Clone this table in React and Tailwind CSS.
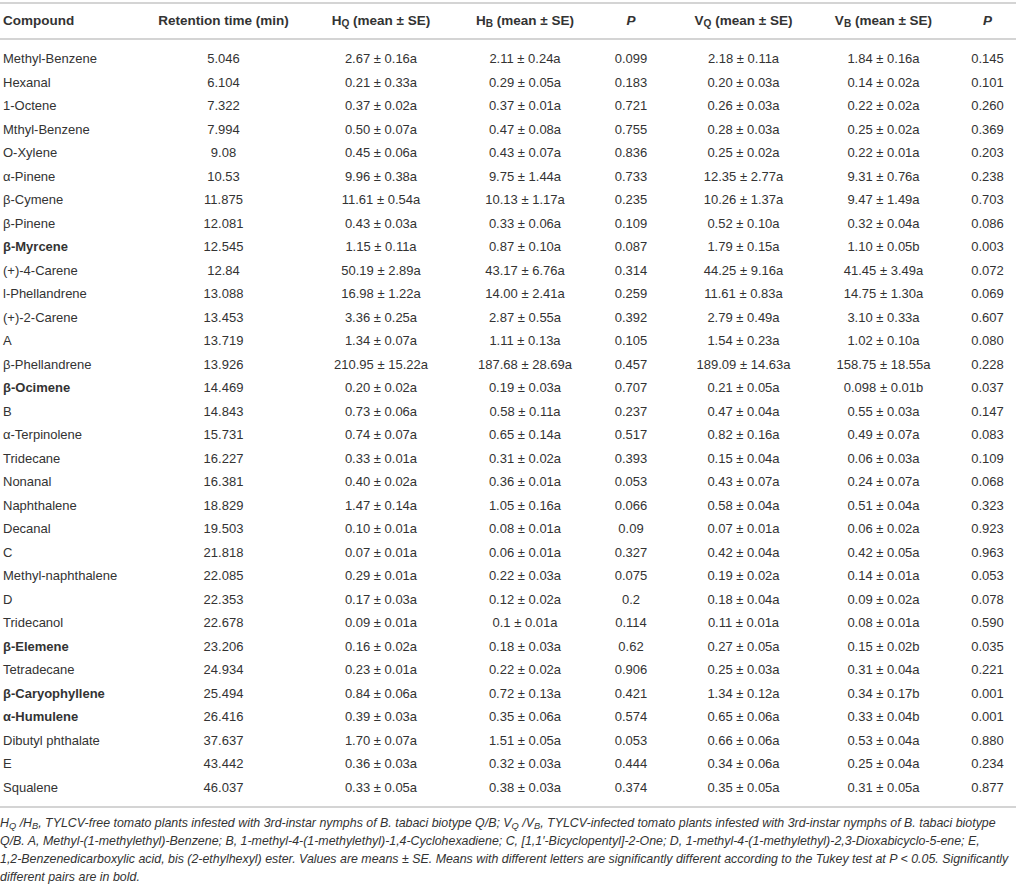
import React from 'react';

const COLS = 'grid grid-cols-[152px_143px_172px_116px_96px_129px_151px_57px]';

// name, retention, HQ, HB, P, VQ, VB, P, bold
const ROWS = [
  ['Methyl-Benzene', '5.046', '2.67 ± 0.16a', '2.11 ± 0.24a', '0.099', '2.18 ± 0.11a', '1.84 ± 0.16a', '0.145'],
  ['Hexanal', '6.104', '0.21 ± 0.33a', '0.29 ± 0.05a', '0.183', '0.20 ± 0.03a', '0.14 ± 0.02a', '0.101'],
  ['1-Octene', '7.322', '0.37 ± 0.02a', '0.37 ± 0.01a', '0.721', '0.26 ± 0.03a', '0.22 ± 0.02a', '0.260'],
  ['Mthyl-Benzene', '7.994', '0.50 ± 0.07a', '0.47 ± 0.08a', '0.755', '0.28 ± 0.03a', '0.25 ± 0.02a', '0.369'],
  ['O-Xylene', '9.08', '0.45 ± 0.06a', '0.43 ± 0.07a', '0.836', '0.25 ± 0.02a', '0.22 ± 0.01a', '0.203'],
  ['α-Pinene', '10.53', '9.96 ± 0.38a', '9.75 ± 1.44a', '0.733', '12.35 ± 2.77a', '9.31 ± 0.76a', '0.238'],
  ['β-Cymene', '11.875', '11.61 ± 0.54a', '10.13 ± 1.17a', '0.235', '10.26 ± 1.37a', '9.47 ± 1.49a', '0.703'],
  ['β-Pinene', '12.081', '0.43 ± 0.03a', '0.33 ± 0.06a', '0.109', '0.52 ± 0.10a', '0.32 ± 0.04a', '0.086'],
  ['β-Myrcene', '12.545', '1.15 ± 0.11a', '0.87 ± 0.10a', '0.087', '1.79 ± 0.15a', '1.10 ± 0.05b', '0.003', true],
  ['(+)-4-Carene', '12.84', '50.19 ± 2.89a', '43.17 ± 6.76a', '0.314', '44.25 ± 9.16a', '41.45 ± 3.49a', '0.072'],
  ['l-Phellandrene', '13.088', '16.98 ± 1.22a', '14.00 ± 2.41a', '0.259', '11.61 ± 0.83a', '14.75 ± 1.30a', '0.069'],
  ['(+)-2-Carene', '13.453', '3.36 ± 0.25a', '2.87 ± 0.55a', '0.392', '2.79 ± 0.49a', '3.10 ± 0.33a', '0.607'],
  ['A', '13.719', '1.34 ± 0.07a', '1.11 ± 0.13a', '0.105', '1.54 ± 0.23a', '1.02 ± 0.10a', '0.080'],
  ['β-Phellandrene', '13.926', '210.95 ± 15.22a', '187.68 ± 28.69a', '0.457', '189.09 ± 14.63a', '158.75 ± 18.55a', '0.228'],
  ['β-Ocimene', '14.469', '0.20 ± 0.02a', '0.19 ± 0.03a', '0.707', '0.21 ± 0.05a', '0.098 ± 0.01b', '0.037', true],
  ['B', '14.843', '0.73 ± 0.06a', '0.58 ± 0.11a', '0.237', '0.47 ± 0.04a', '0.55 ± 0.03a', '0.147'],
  ['α-Terpinolene', '15.731', '0.74 ± 0.07a', '0.65 ± 0.14a', '0.517', '0.82 ± 0.16a', '0.49 ± 0.07a', '0.083'],
  ['Tridecane', '16.227', '0.33 ± 0.01a', '0.31 ± 0.02a', '0.393', '0.15 ± 0.04a', '0.06 ± 0.03a', '0.109'],
  ['Nonanal', '16.381', '0.40 ± 0.02a', '0.36 ± 0.01a', '0.053', '0.43 ± 0.07a', '0.24 ± 0.07a', '0.068'],
  ['Naphthalene', '18.829', '1.47 ± 0.14a', '1.05 ± 0.16a', '0.066', '0.58 ± 0.04a', '0.51 ± 0.04a', '0.323'],
  ['Decanal', '19.503', '0.10 ± 0.01a', '0.08 ± 0.01a', '0.09', '0.07 ± 0.01a', '0.06 ± 0.02a', '0.923'],
  ['C', '21.818', '0.07 ± 0.01a', '0.06 ± 0.01a', '0.327', '0.42 ± 0.04a', '0.42 ± 0.05a', '0.963'],
  ['Methyl-naphthalene', '22.085', '0.29 ± 0.01a', '0.22 ± 0.03a', '0.075', '0.19 ± 0.02a', '0.14 ± 0.01a', '0.053'],
  ['D', '22.353', '0.17 ± 0.03a', '0.12 ± 0.02a', '0.2', '0.18 ± 0.04a', '0.09 ± 0.02a', '0.078'],
  ['Tridecanol', '22.678', '0.09 ± 0.01a', '0.1 ± 0.01a', '0.114', '0.11 ± 0.01a', '0.08 ± 0.01a', '0.590'],
  ['β-Elemene', '23.206', '0.16 ± 0.02a', '0.18 ± 0.03a', '0.62', '0.27 ± 0.05a', '0.15 ± 0.02b', '0.035', true],
  ['Tetradecane', '24.934', '0.23 ± 0.01a', '0.22 ± 0.02a', '0.906', '0.25 ± 0.03a', '0.31 ± 0.04a', '0.221'],
  ['β-Caryophyllene', '25.494', '0.84 ± 0.06a', '0.72 ± 0.13a', '0.421', '1.34 ± 0.12a', '0.34 ± 0.17b', '0.001', true],
  ['α-Humulene', '26.416', '0.39 ± 0.03a', '0.35 ± 0.06a', '0.574', '0.65 ± 0.06a', '0.33 ± 0.04b', '0.001', true],
  ['Dibutyl phthalate', '37.637', '1.70 ± 0.07a', '1.51 ± 0.05a', '0.053', '0.66 ± 0.06a', '0.53 ± 0.04a', '0.880'],
  ['E', '43.442', '0.36 ± 0.03a', '0.32 ± 0.03a', '0.444', '0.34 ± 0.06a', '0.25 ± 0.04a', '0.234'],
  ['Squalene', '46.037', '0.33 ± 0.05a', '0.38 ± 0.03a', '0.374', '0.35 ± 0.05a', '0.31 ± 0.05a', '0.877'],
];

const Sym = ({ base, sub }) => (
  <>
    {base}
    <sub>{sub}</sub>
  </>
);

const App = () => {
  return (
    <div className="w-[1016px] bg-white text-[#333333] text-[13px] font-['Liberation_Sans',Arial,sans-serif]">
      <div className="pt-[2px]">
        {/* Header */}
        <div className={`${COLS} h-[38px] items-center border-y-2 border-[#d4d4d4] font-bold text-[13.5px]`}>
          <div className="pl-[3px]">Compound</div>
          <div className="text-center">Retention time (min)</div>
          <div className="text-center"><Sym base="H" sub="Q" /> (mean ± SE)</div>
          <div className="text-center"><Sym base="H" sub="B" /> (mean ± SE)</div>
          <div className="text-center italic">P</div>
          <div className="text-center"><Sym base="V" sub="Q" /> (mean ± SE)</div>
          <div className="text-center"><Sym base="V" sub="B" /> (mean ± SE)</div>
          <div className="text-center italic">P</div>
        </div>

        {/* Body */}
        <div className="py-[7px] border-b-2 border-[#d4d4d4]">
          {ROWS.map((r) => (
            <div key={r[0]} className={`${COLS} h-[23.5px] items-center leading-none whitespace-nowrap`}>
              <div className={`pl-[3px] ${r[8] ? 'font-bold' : ''}`}>{r[0]}</div>
              {r.slice(1, 8).map((v, i) => (
                <div key={i} className="text-center">{v}</div>
              ))}
            </div>
          ))}
        </div>

        {/* Footnote */}
        <div className="pt-[6px] italic text-[12.4px] leading-[18px] whitespace-nowrap">
          <div>
            <Sym base="H" sub="Q" /> /<Sym base="H" sub="B" />, TYLCV-free tomato plants infested with 3rd-instar nymphs of B. tabaci biotype Q/B; <Sym base="V" sub="Q" /> /<Sym base="V" sub="B" />, TYLCV-infected tomato plants infested with 3rd-instar nymphs of B. tabaci biotype
          </div>
          <div>
            Q/B. A, Methyl-(1-methylethyl)-Benzene; B, 1-methyl-4-(1-methylethyl)-1,4-Cyclohexadiene; C, [1,1′-Bicyclopentyl]-2-One; D, 1-methyl-4-(1-methylethyl)-2,3-Dioxabicyclo-5-ene; E,
          </div>
          <div>
            1,2-Benzenedicarboxylic acid, bis (2-ethylhexyl) ester. Values are means ± SE. Means with different letters are significantly different according to the Tukey test at P &lt; 0.05. Significantly
          </div>
          <div>different pairs are in bold.</div>
        </div>
      </div>
    </div>
  );
};

export default App;
